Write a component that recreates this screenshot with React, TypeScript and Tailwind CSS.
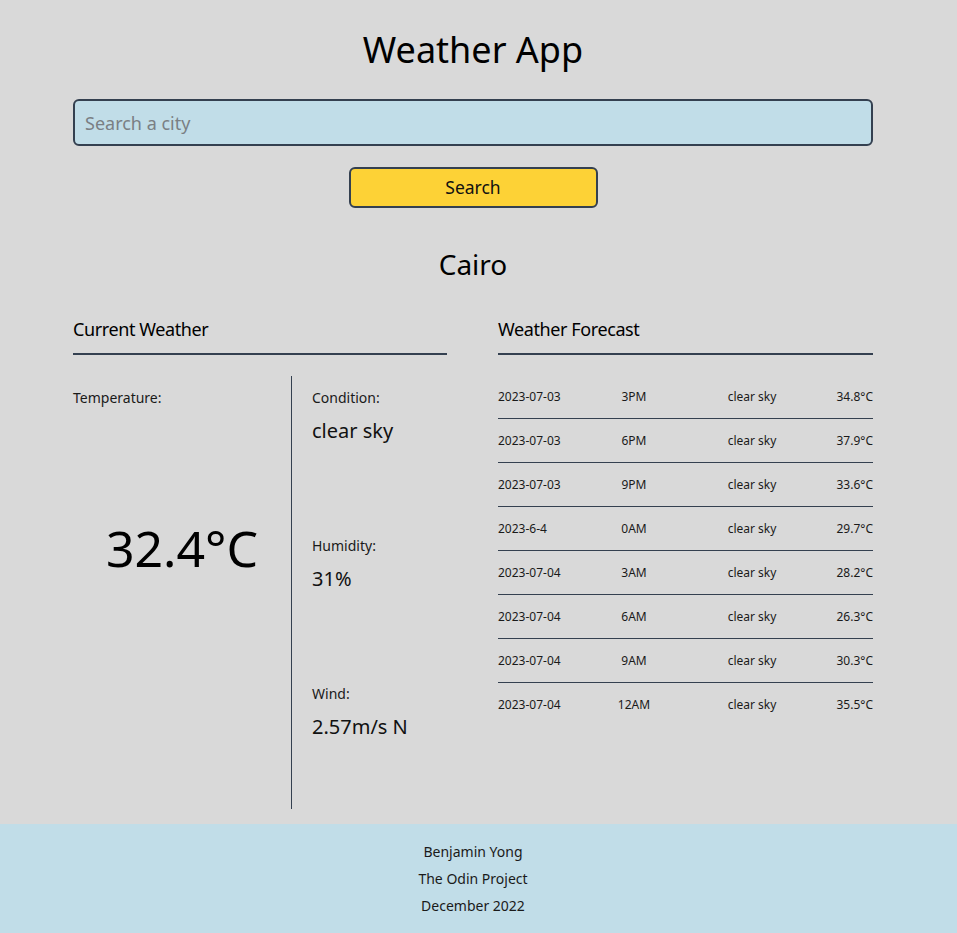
import React, { useState } from 'react';

interface ForecastRow {
  date: string;
  time: string;
  condition: string;
  temp: string;
}

const forecast: ForecastRow[] = [
  { date: '2023-07-03', time: '3PM', condition: 'clear sky', temp: '34.8°C' },
  { date: '2023-07-03', time: '6PM', condition: 'clear sky', temp: '37.9°C' },
  { date: '2023-07-03', time: '9PM', condition: 'clear sky', temp: '33.6°C' },
  { date: '2023-6-4', time: '0AM', condition: 'clear sky', temp: '29.7°C' },
  { date: '2023-07-04', time: '3AM', condition: 'clear sky', temp: '28.2°C' },
  { date: '2023-07-04', time: '6AM', condition: 'clear sky', temp: '26.3°C' },
  { date: '2023-07-04', time: '9AM', condition: 'clear sky', temp: '30.3°C' },
  { date: '2023-07-04', time: '12AM', condition: 'clear sky', temp: '35.5°C' },
];

function Detail({ label, value }: { label: string; value: string }) {
  return (
    <div className="h-[148px]">
      <div className="text-[14px] leading-[20px] text-[#1a1a1a]">{label}</div>
      <div className="mt-[9px] text-[20px] leading-[28px] text-[#111]">{value}</div>
    </div>
  );
}

export default function App() {
  const [city, setCity] = useState('');

  return (
    <div
      className="min-h-screen bg-[#d9d9d9] flex flex-col text-black"
      style={{ fontFamily: '"Noto Sans", "Open Sans", sans-serif' }}
    >
      <main className="ml-[73px] w-[800px] pt-[28px] h-[824px]">
        <h1 className="text-center text-[36px] leading-[44px] font-normal">Weather App</h1>

        <input
          value={city}
          onChange={(e) => setCity(e.target.value)}
          placeholder="Search a city"
          autoFocus
          className="mt-[27px] block w-full h-[47px] px-[10px] bg-[#c1dde8] border-2 border-[#344050] rounded-[6px] text-[18px] placeholder:text-[#7a7f84] outline-none"
        />

        <div className="flex justify-center mt-[21px]">
          <button className="w-[249px] h-[41px] bg-[#fdd236] border-2 border-[#344050] rounded-[6px] text-[17.5px] text-[#111]">
            Search
          </button>
        </div>

        <h2 className="mt-[39px] text-center text-[28px] leading-[34px]">Cairo</h2>

        <div className="mt-[36px] flex gap-[51px]">
          <section className="w-[374px]">
            <h3 className="text-[18px] leading-[24px] tracking-[-0.4px] pb-[12px] border-b-2 border-[#344050]">
              Current Weather
            </h3>
            <div className="mt-[21px] flex h-[433px]">
              <div className="w-[219px] border-r border-[#344050] pt-[12px] flex flex-col">
                <div className="text-[14px] leading-[20px] text-[#1a1a1a]">Temperature:</div>
                <div className="mt-[112px] text-center text-[50px] leading-[56px]">32.4°C</div>
              </div>
              <div className="pl-[20px] pt-[12px]">
                <Detail label="Condition:" value="clear sky" />
                <Detail label="Humidity:" value="31%" />
                <Detail label="Wind:" value="2.57m/s N" />
              </div>
            </div>
          </section>

          <section className="w-[375px]">
            <h3 className="text-[18px] leading-[24px] tracking-[-0.4px] pb-[12px] border-b-2 border-[#344050]">
              Weather Forecast
            </h3>
            <div className="mt-[20px]">
              {forecast.map((row, i) => (
                <div
                  key={i}
                  className={`grid grid-cols-[100px_72px_164px_1fr] items-center h-[44px] text-[12px] text-[#1a1a1a] ${
                    i < forecast.length - 1 ? 'border-b border-[#344050]' : ''
                  }`}
                >
                  <span>{row.date}</span>
                  <span className="text-center">{row.time}</span>
                  <span className="text-center">{row.condition}</span>
                  <span className="text-right">{row.temp}</span>
                </div>
              ))}
            </div>
          </section>
        </div>
      </main>

      <footer className="bg-[#c1dde8] h-[109px] pt-[14px] pr-[11px] text-center text-[14px] leading-[27px] text-[#1a1a1a]">
        <div>Benjamin Yong</div>
        <div>The Odin Project</div>
        <div>December 2022</div>
      </footer>
    </div>
  );
}
